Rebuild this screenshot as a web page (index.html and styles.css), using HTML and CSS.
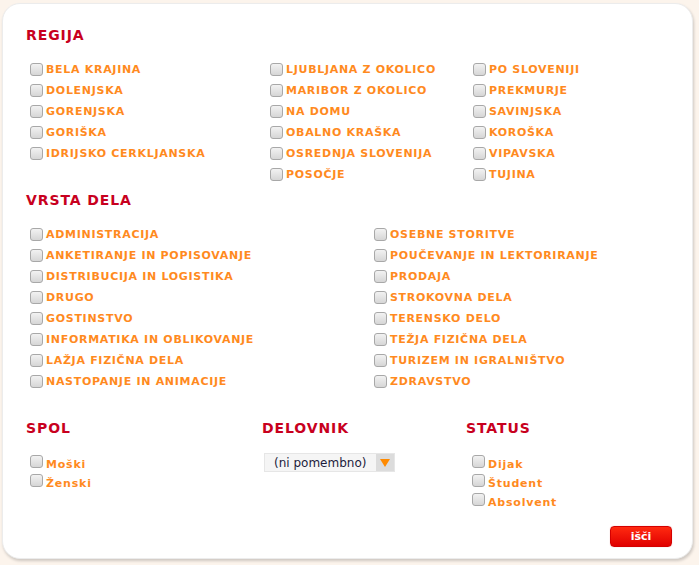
FILE: index.html
```html
<!DOCTYPE html>
<html>
<head>
<meta charset="utf-8">
<link rel="stylesheet" href="styles.css">
</head>
<body>
<div class="panel">
  <h2 class="heading">REGIJA</h2>
  <div class="cols regija">
    <div class="col">
      <label class="item"><input type="checkbox"><span>BELA KRAJINA</span></label>
      <label class="item"><input type="checkbox"><span>DOLENJSKA</span></label>
      <label class="item"><input type="checkbox"><span>GORENJSKA</span></label>
      <label class="item"><input type="checkbox"><span>GORIŠKA</span></label>
      <label class="item"><input type="checkbox"><span>IDRIJSKO CERKLJANSKA</span></label>
    </div>
    <div class="col">
      <label class="item"><input type="checkbox"><span>LJUBLJANA Z OKOLICO</span></label>
      <label class="item"><input type="checkbox"><span>MARIBOR Z OKOLICO</span></label>
      <label class="item"><input type="checkbox"><span>NA DOMU</span></label>
      <label class="item"><input type="checkbox"><span>OBALNO KRAŠKA</span></label>
      <label class="item"><input type="checkbox"><span>OSREDNJA SLOVENIJA</span></label>
      <label class="item"><input type="checkbox"><span>POSOČJE</span></label>
    </div>
    <div class="col">
      <label class="item"><input type="checkbox"><span>PO SLOVENIJI</span></label>
      <label class="item"><input type="checkbox"><span>PREKMURJE</span></label>
      <label class="item"><input type="checkbox"><span>SAVINJSKA</span></label>
      <label class="item"><input type="checkbox"><span>KOROŠKA</span></label>
      <label class="item"><input type="checkbox"><span>VIPAVSKA</span></label>
      <label class="item"><input type="checkbox"><span>TUJINA</span></label>
    </div>
  </div>

  <h2 class="heading heading-vrsta">VRSTA DELA</h2>
  <div class="cols vrsta">
    <div class="col">
      <label class="item"><input type="checkbox"><span>ADMINISTRACIJA</span></label>
      <label class="item"><input type="checkbox"><span>ANKETIRANJE IN POPISOVANJE</span></label>
      <label class="item"><input type="checkbox"><span>DISTRIBUCIJA IN LOGISTIKA</span></label>
      <label class="item"><input type="checkbox"><span>DRUGO</span></label>
      <label class="item"><input type="checkbox"><span>GOSTINSTVO</span></label>
      <label class="item"><input type="checkbox"><span>INFORMATIKA IN OBLIKOVANJE</span></label>
      <label class="item"><input type="checkbox"><span>LAŽJA FIZIČNA DELA</span></label>
      <label class="item"><input type="checkbox"><span>NASTOPANJE IN ANIMACIJE</span></label>
    </div>
    <div class="col">
      <label class="item"><input type="checkbox"><span>OSEBNE STORITVE</span></label>
      <label class="item"><input type="checkbox"><span>POUČEVANJE IN LEKTORIRANJE</span></label>
      <label class="item"><input type="checkbox"><span>PRODAJA</span></label>
      <label class="item"><input type="checkbox"><span>STROKOVNA DELA</span></label>
      <label class="item"><input type="checkbox"><span>TERENSKO DELO</span></label>
      <label class="item"><input type="checkbox"><span>TEŽJA FIZIČNA DELA</span></label>
      <label class="item"><input type="checkbox"><span>TURIZEM IN IGRALNIŠTVO</span></label>
      <label class="item"><input type="checkbox"><span>ZDRAVSTVO</span></label>
    </div>
  </div>

  <div class="bottom">
    <div class="bcol spol">
      <h2 class="heading">SPOL</h2>
      <div class="small-list">
        <label class="sitem"><input type="checkbox"><span>Moški</span></label>
        <label class="sitem"><input type="checkbox"><span>Ženski</span></label>
      </div>
    </div>
    <div class="bcol delovnik">
      <h2 class="heading">DELOVNIK</h2>
      <div class="select">
        <span class="select-text">(ni pomembno)</span>
        <span class="select-arrow"></span>
      </div>
    </div>
    <div class="bcol status">
      <h2 class="heading">STATUS</h2>
      <div class="small-list">
        <label class="sitem"><input type="checkbox"><span>Dijak</span></label>
        <label class="sitem"><input type="checkbox"><span>Študent</span></label>
        <label class="sitem"><input type="checkbox"><span>Absolvent</span></label>
      </div>
    </div>
  </div>

  <div class="actions">
    <button class="btn" type="button">išči</button>
  </div>
</div>
</body>
</html>
```

FILE: styles.css
```css
html, body {
  margin: 0;
  padding: 0;
}
body {
  background: #fcf4ec;
  font-family: "DejaVu Sans", Verdana, sans-serif;
  width: 699px;
  height: 565px;
  overflow: hidden;
}
.panel {
  box-sizing: border-box;
  margin: 3px 0 0 2px;
  width: 691px;
  height: 556px;
  background: #fff;
  border: 1px solid #ececec;
  border-radius: 18px;
  box-shadow: 1px 2px 3px rgba(0,0,0,0.18);
  padding: 23px 0 0 23px;
  position: relative;
}
.heading {
  margin: 0;
  font-size: 14px;
  line-height: 16px;
  font-weight: bold;
  color: #c8001e;
  letter-spacing: 0.9px;
}
.cols {
  display: flex;
  padding-left: 4px;
}
.regija {
  margin-top: 16px;
}
.regija .col:nth-child(1) { width: 240px; }
.regija .col:nth-child(2) { width: 203px; }
.heading-vrsta {
  margin-top: 7px;
}
.vrsta {
  margin-top: 16px;
}
.vrsta .col:nth-child(1) { width: 344px; }
.col {
  display: flex;
  flex-direction: column;
}
.item {
  display: flex;
  align-items: center;
  height: 21px;
  gap: 3px;
  font-size: 11px;
  font-weight: bold;
  color: #ff8a1e;
  letter-spacing: 0.7px;
  white-space: nowrap;
}
input[type=checkbox] {
  -webkit-appearance: none;
  appearance: none;
  margin: 0;
  width: 13px;
  height: 13px;
  box-sizing: border-box;
  border: 1px solid #a8a8a8;
  border-radius: 3px;
  background: linear-gradient(#f2f2f2, #d6d6d6);
  flex: none;
}
.bottom {
  display: flex;
  margin-top: 28px;
}
.spol { width: 236px; }
.delovnik { width: 204px; }
.small-list {
  display: flex;
  flex-direction: column;
  margin-top: 19px;
  padding-left: 4px;
}
.status .small-list { padding-left: 6px; }
.sitem {
  display: flex;
  align-items: flex-start;
  height: 19px;
  gap: 3px;
  font-size: 11px;
  font-weight: bold;
  color: #ff8a1e;
  letter-spacing: 0.8px;
}
.sitem span {
  line-height: 13px;
  padding-top: 3px;
}
.select {
  margin-top: 17px;
  margin-left: 2px;
  width: 131px;
  height: 19px;
  box-sizing: border-box;
  background: #f5f5f5;
  border: 1px solid #e6e6e6;
  display: flex;
  align-items: center;
  justify-content: space-between;
}
.select-text {
  font-family: "DejaVu Sans", Verdana, sans-serif;
  font-size: 12px;
  color: #1c1c3c;
  padding-left: 9px;
}
.select-arrow {
  width: 18px;
  height: 17px;
  background: #dcdcdc;
  position: relative;
}
.select-arrow::after {
  content: "";
  position: absolute;
  left: 4px;
  top: 5px;
  border-left: 5px solid transparent;
  border-right: 5px solid transparent;
  border-top: 8px solid #ff8a00;
}
.actions {
  display: flex;
  justify-content: flex-end;
  padding-right: 20px;
  position: absolute;
  right: 0;
  bottom: 11px;
}
.btn {
  width: 62px;
  height: 21px;
  border: 1px solid #d40000;
  border-radius: 4px;
  background: linear-gradient(#ff2a10, #e00000);
  color: #fff;
  font-family: "DejaVu Sans", Verdana, sans-serif;
  font-weight: bold;
  font-size: 11px;
  padding: 0;
  box-shadow: 0 0 1px rgba(200,0,0,0.4);
}
```
